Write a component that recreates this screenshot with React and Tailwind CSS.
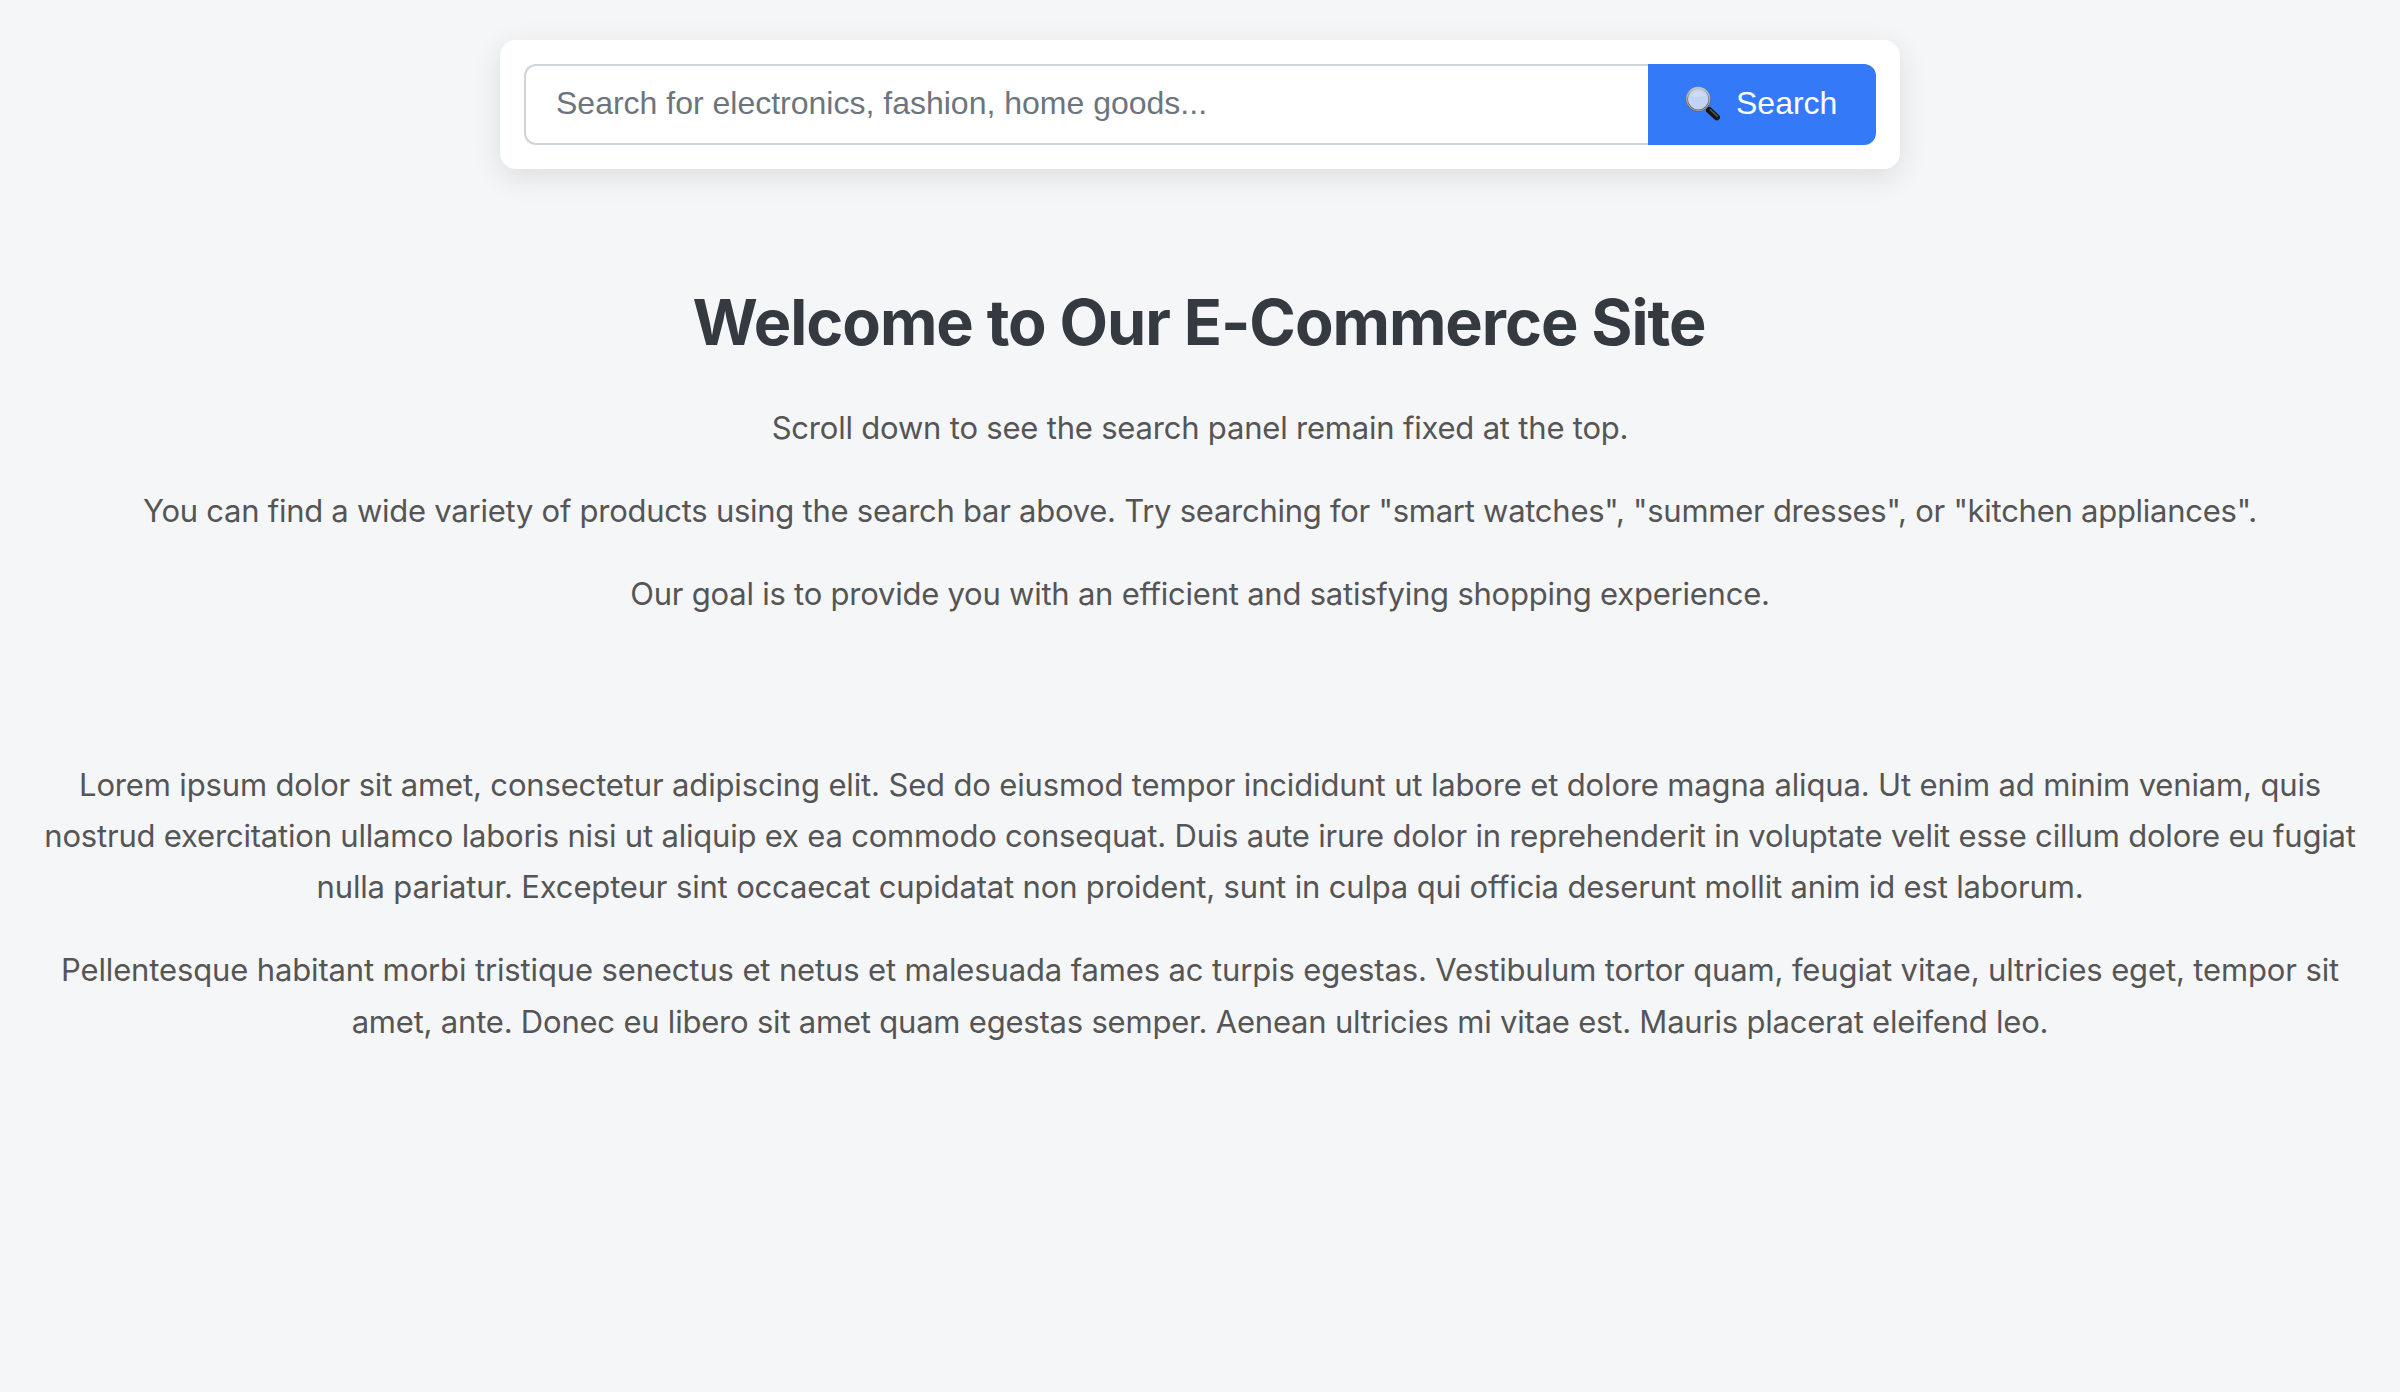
function MagnifierIcon() {
  return (
    <svg className="mr-[15px] h-9 w-9 shrink-0" viewBox="0 0 36 36" fill="none">
      <defs>
        <linearGradient id="rim" x1="0" y1="0" x2="0" y2="1">
          <stop offset="0" stopColor="#b9bcc0" />
          <stop offset="0.5" stopColor="#77797c" />
          <stop offset="1" stopColor="#5c5e62" />
        </linearGradient>
      </defs>
      <path d="M21.3 21.3L24 24" stroke="#8b8d90" strokeWidth="2.6" />
      <path d="M24.1 24.1L31.8 31.2" stroke="#151515" strokeWidth="6.2" strokeLinecap="round" />
      <path d="M25.2 23.6L32.4 30.4" stroke="#505050" strokeWidth="1.6" strokeLinecap="round" />
      <circle cx="13.2" cy="13.2" r="11.3" fill="#c3d3f5" stroke="url(#rim)" strokeWidth="2.2" />
      <circle cx="13.2" cy="13.2" r="11.5" stroke="#d5d7da" strokeWidth="0.6" />
      <path d="M6 9.5C8.5 4.5 17.5 4.2 20.5 9.5C17 11.3 10 11.3 6 9.5Z" fill="#cfdcf8" />
    </svg>
  );
}

function Line({ children, className }) {
  return <span className={`block whitespace-nowrap ${className}`}>{children}</span>;
}

export default function App() {
  return (
    <div className="h-[1392px] overflow-hidden bg-[#f5f6f8] pt-10 text-center font-[Inter,sans-serif] text-[31px] leading-[51.2px] text-[#555]">
      <form className="mx-auto flex h-[129px] w-[1400px] rounded-[16px] bg-white p-6 font-['Liberation_Sans',sans-serif] text-[32px] shadow-[0_8px_30px_rgba(0,0,0,0.1)]">
        <input
          type="text"
          placeholder="Search for electronics, fashion, home goods..."
          className="min-w-0 flex-1 rounded-l-[12px] border-2 border-r-0 border-[#ced4da] pb-[2px] pl-[30px] outline-none placeholder:text-[#6c757d]"
        />
        <button type="button" className="flex w-[228px] items-center rounded-r-[12px] bg-[#3479f7] pb-[2px] pl-[37px] text-white">
          <MagnifierIcon />
          Search
        </button>
      </form>
      <main>
        <h1 className="mt-[111px] mb-[38px] pr-[2px] text-[63px] font-bold leading-[84px] tracking-[-1.05px] text-[#343a40]">Welcome to Our E-Commerce Site</h1>
        <p className="mb-8">
          <Line className="tracking-[-0.2px]">Scroll down to see the search panel remain fixed at the top.</Line>
        </p>
        <p className="mb-8">
          <Line className="tracking-[-0.26px]">You can find a wide variety of products using the search bar above. Try searching for "smart watches", "summer dresses", or "kitchen appliances".</Line>
        </p>
        <p className="mb-[139.2px]">
          <Line className="tracking-[-0.23px]">Our goal is to provide you with an efficient and satisfying shopping experience.</Line>
        </p>
        <p className="mb-8">
          <Line className="tracking-[-0.15px]">Lorem ipsum dolor sit amet, consectetur adipiscing elit. Sed do eiusmod tempor incididunt ut labore et dolore magna aliqua. Ut enim ad minim veniam, quis</Line>
          <Line className="tracking-[-0.195px]">nostrud exercitation ullamco laboris nisi ut aliquip ex ea commodo consequat. Duis aute irure dolor in reprehenderit in voluptate velit esse cillum dolore eu fugiat</Line>
          <Line className="tracking-[-0.165px]">nulla pariatur. Excepteur sint occaecat cupidatat non proident, sunt in culpa qui officia deserunt mollit anim id est laborum.</Line>
        </p>
        <p>
          <Line className="tracking-[-0.133px]">Pellentesque habitant morbi tristique senectus et netus et malesuada fames ac turpis egestas. Vestibulum tortor quam, feugiat vitae, ultricies eget, tempor sit</Line>
          <Line className="tracking-[-0.21px]">amet, ante. Donec eu libero sit amet quam egestas semper. Aenean ultricies mi vitae est. Mauris placerat eleifend leo.</Line>
        </p>
      </main>
    </div>
  );
}
